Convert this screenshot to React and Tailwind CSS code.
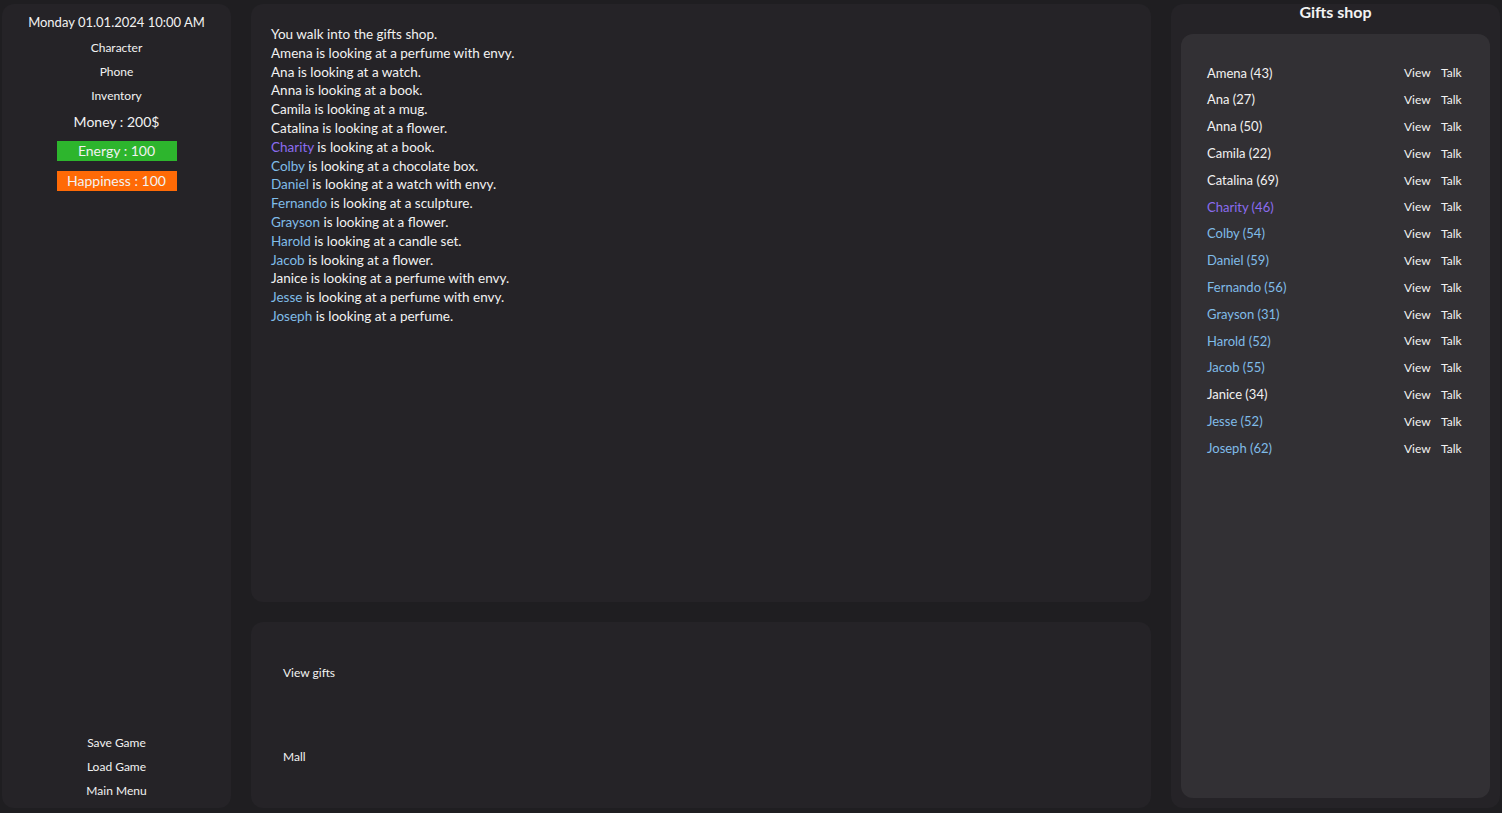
import React from "react";

const people = [
  { n: "Amena", a: 43, c: "w", t: "a perfume with envy" },
  { n: "Ana", a: 27, c: "w", t: "a watch" },
  { n: "Anna", a: 50, c: "w", t: "a book" },
  { n: "Camila", a: 22, c: "w", t: "a mug" },
  { n: "Catalina", a: 69, c: "w", t: "a flower" },
  { n: "Charity", a: 46, c: "p", t: "a book" },
  { n: "Colby", a: 54, c: "b", t: "a chocolate box" },
  { n: "Daniel", a: 59, c: "b", t: "a watch with envy" },
  { n: "Fernando", a: 56, c: "b", t: "a sculpture" },
  { n: "Grayson", a: 31, c: "b", t: "a flower" },
  { n: "Harold", a: 52, c: "b", t: "a candle set" },
  { n: "Jacob", a: 55, c: "b", t: "a flower" },
  { n: "Janice", a: 34, c: "w", t: "a perfume with envy" },
  { n: "Jesse", a: 52, c: "b", t: "a perfume with envy" },
  { n: "Joseph", a: 62, c: "b", t: "a perfume" },
];

const colorCls = {
  w: "text-[#f2f2f2]",
  p: "text-[#8b6cf0]",
  b: "text-[#80bce8]",
};

export default function App() {
  return (
    <div
      className="w-[1502px] h-[813px] bg-[#1f1e21] text-[#f2f2f2] flex gap-5 px-[2px] pt-[4px] pb-[5px] overflow-hidden"
      style={{ fontFamily: "Lato, 'Noto Sans', sans-serif" }}
    >
      {/* Left panel */}
      <div className="w-[229px] shrink-0 bg-[#252327] rounded-xl flex flex-col items-center justify-between pt-[9px] pb-[5px]">
        <div className="flex flex-col items-center">
          <div className="text-[13px] leading-[18px]">Monday 01.01.2024 10:00 AM</div>
          <div className="text-[12px] leading-[24px] mt-[5px]">Character</div>
          <div className="text-[12px] leading-[24px]">Phone</div>
          <div className="text-[12px] leading-[24px]">Inventory</div>
          <div className="text-[14px] leading-[26px] mt-[1px]">Money : 200$</div>
          <div className="w-[120px] h-[20px] bg-[#2db52d] text-[14px] leading-[20px] text-center mt-[6px]">Energy : 100</div>
          <div className="w-[120px] h-[20px] bg-[#ff6a06] text-[14px] leading-[20px] text-center mt-[10px]">Happiness : 100</div>
        </div>
        <div className="flex flex-col items-center text-[12px] leading-[24px]">
          <div>Save Game</div>
          <div>Load Game</div>
          <div>Main Menu</div>
        </div>
      </div>

      {/* Middle column */}
      <div className="w-[900px] shrink-0 flex flex-col gap-5">
        <div className="h-[598px] bg-[#252327] rounded-xl px-5 pt-[21px] text-[13.5px] leading-[18.8px]">
          <div>You walk into the gifts shop.</div>
          {people.map((p) => (
            <div key={p.n}>
              <span className={colorCls[p.c]}>{p.n}</span> is looking at {p.t}.
            </div>
          ))}
        </div>
        <div className="flex-1 bg-[#252327] rounded-xl px-8 flex flex-col text-[12px]">
          <div className="mt-[43px] leading-[16px]">View gifts</div>
          <div className="mt-[68px] leading-[16px]">Mall</div>
        </div>
      </div>

      {/* Right panel */}
      <div className="flex-1 bg-[#252327] rounded-xl flex flex-col px-[10px] pb-[10px]">
        <div className="text-[16px] font-bold leading-[16px] text-center h-[30px]">Gifts shop</div>
        <div className="flex-1 bg-[#323034] rounded-xl pl-[26px] pr-[30px] pt-[26px]">
          {people.map((p) => (
            <div key={p.n} className="flex items-center h-[26.8px]">
              <span className={`text-[13px] flex-1 ${colorCls[p.c]}`}>
                {p.n} ({p.a})
              </span>
              <span className="text-[12px] w-[37px]">View</span>
              <span className="text-[12px] w-[19px]">Talk</span>
            </div>
          ))}
        </div>
      </div>
    </div>
  );
}
